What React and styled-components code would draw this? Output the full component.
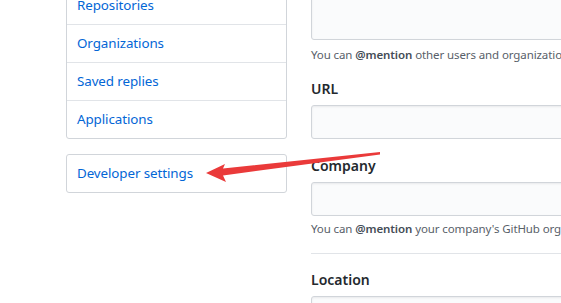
import React from 'react';
import styled, { createGlobalStyle } from 'styled-components';

const GlobalStyle = createGlobalStyle`
  html, body {
    margin: 0;
    padding: 0;
    background: #fff;
    overflow: hidden;
  }
  body {
    font-family: "Noto Sans", "Open Sans", Arial, sans-serif;
    color: #24292e;
  }
`;

const Page = styled.div`
  position: relative;
  display: flex;
  width: 561px;
  height: 303px;
  overflow: hidden;
  padding-left: 66px;
  box-sizing: border-box;
`;

const SideColumn = styled.div`
  width: 221px;
  flex: none;
  margin-top: -14px;
`;

const Menu = styled.nav`
  border: 1px solid #d1d5da;
  border-radius: 3px;
  background: #fff;
  margin-bottom: 15px;
`;

const MenuItem = styled.a`
  display: block;
  height: 37px;
  line-height: 37px;
  padding: 0 10px;
  font-size: 13.4px;
  letter-spacing: -0.1px;
  color: #0366d6;
  text-decoration: none;
  border-top: ${(p) => (p.$first ? 'none' : '1px solid #e1e4e8')};
`;

const MainColumn = styled.div`
  margin-left: 24px;
  width: 420px;
  flex: none;
  margin-top: -60px;
`;

const TextArea = styled.div`
  height: 98px;
  border: 1px solid #d1d5da;
  border-radius: 3px;
  background: #fafbfc;
  box-shadow: inset 0 1px 2px rgba(27, 31, 35, 0.075);
`;

const Note = styled.p`
  margin: ${(p) => p.$top}px 0 0;
  font-size: 11.5px;
  letter-spacing: -0.1px;
  line-height: 18px;
  color: #586069;
  white-space: nowrap;

  strong {
    font-weight: 600;
    color: #444d56;
  }
`;

const Group = styled.div`
  margin-top: ${(p) => p.$top}px;
`;

const Label = styled.div`
  font-size: 14px;
  font-weight: 600;
  line-height: 21px;
  margin-bottom: 6px;
`;

const Input = styled.div`
  height: 32px;
  border: 1px solid #d1d5da;
  border-radius: 3px;
  background: #fafbfc;
  box-shadow: inset 0 1px 2px rgba(27, 31, 35, 0.075);
`;

const Rule = styled.hr`
  margin: 15px 0 0;
  border: 0;
  border-top: 1px solid #e1e4e8;
`;

const Arrow = styled.svg`
  position: absolute;
  left: 0;
  top: 0;
  pointer-events: none;
`;

const App = () => {
  return (
    <>
      <GlobalStyle />
      <Page>
        <SideColumn>
          <Menu>
            <MenuItem $first>Repositories</MenuItem>
            <MenuItem>Organizations</MenuItem>
            <MenuItem>Saved replies</MenuItem>
            <MenuItem>Applications</MenuItem>
          </Menu>
          <Menu>
            <MenuItem $first>Developer settings</MenuItem>
          </Menu>
        </SideColumn>
        <MainColumn>
          <TextArea />
          <Note $top={6}>
            You can <strong>@mention</strong> other users and organizations to link to them.
          </Note>
          <Group $top={14}>
            <Label>URL</Label>
            <Input />
          </Group>
          <Group $top={16}>
            <Label>Company</Label>
            <Input />
            <Note $top={4}>
              You can <strong>@mention</strong> your company's GitHub organization to link it.
            </Note>
          </Group>
          <Rule />
          <Group $top={15}>
            <Label>Location</Label>
            <Input />
          </Group>
        </MainColumn>
        <Arrow width="561" height="303" viewBox="0 0 561 303">
          <polygon
            points="206,173 225,164 223,168.5 380,152 380,154.5 223,175.5 226,182"
            fill="#ea3a3a"
          />
        </Arrow>
      </Page>
    </>
  );
};

export default App;
